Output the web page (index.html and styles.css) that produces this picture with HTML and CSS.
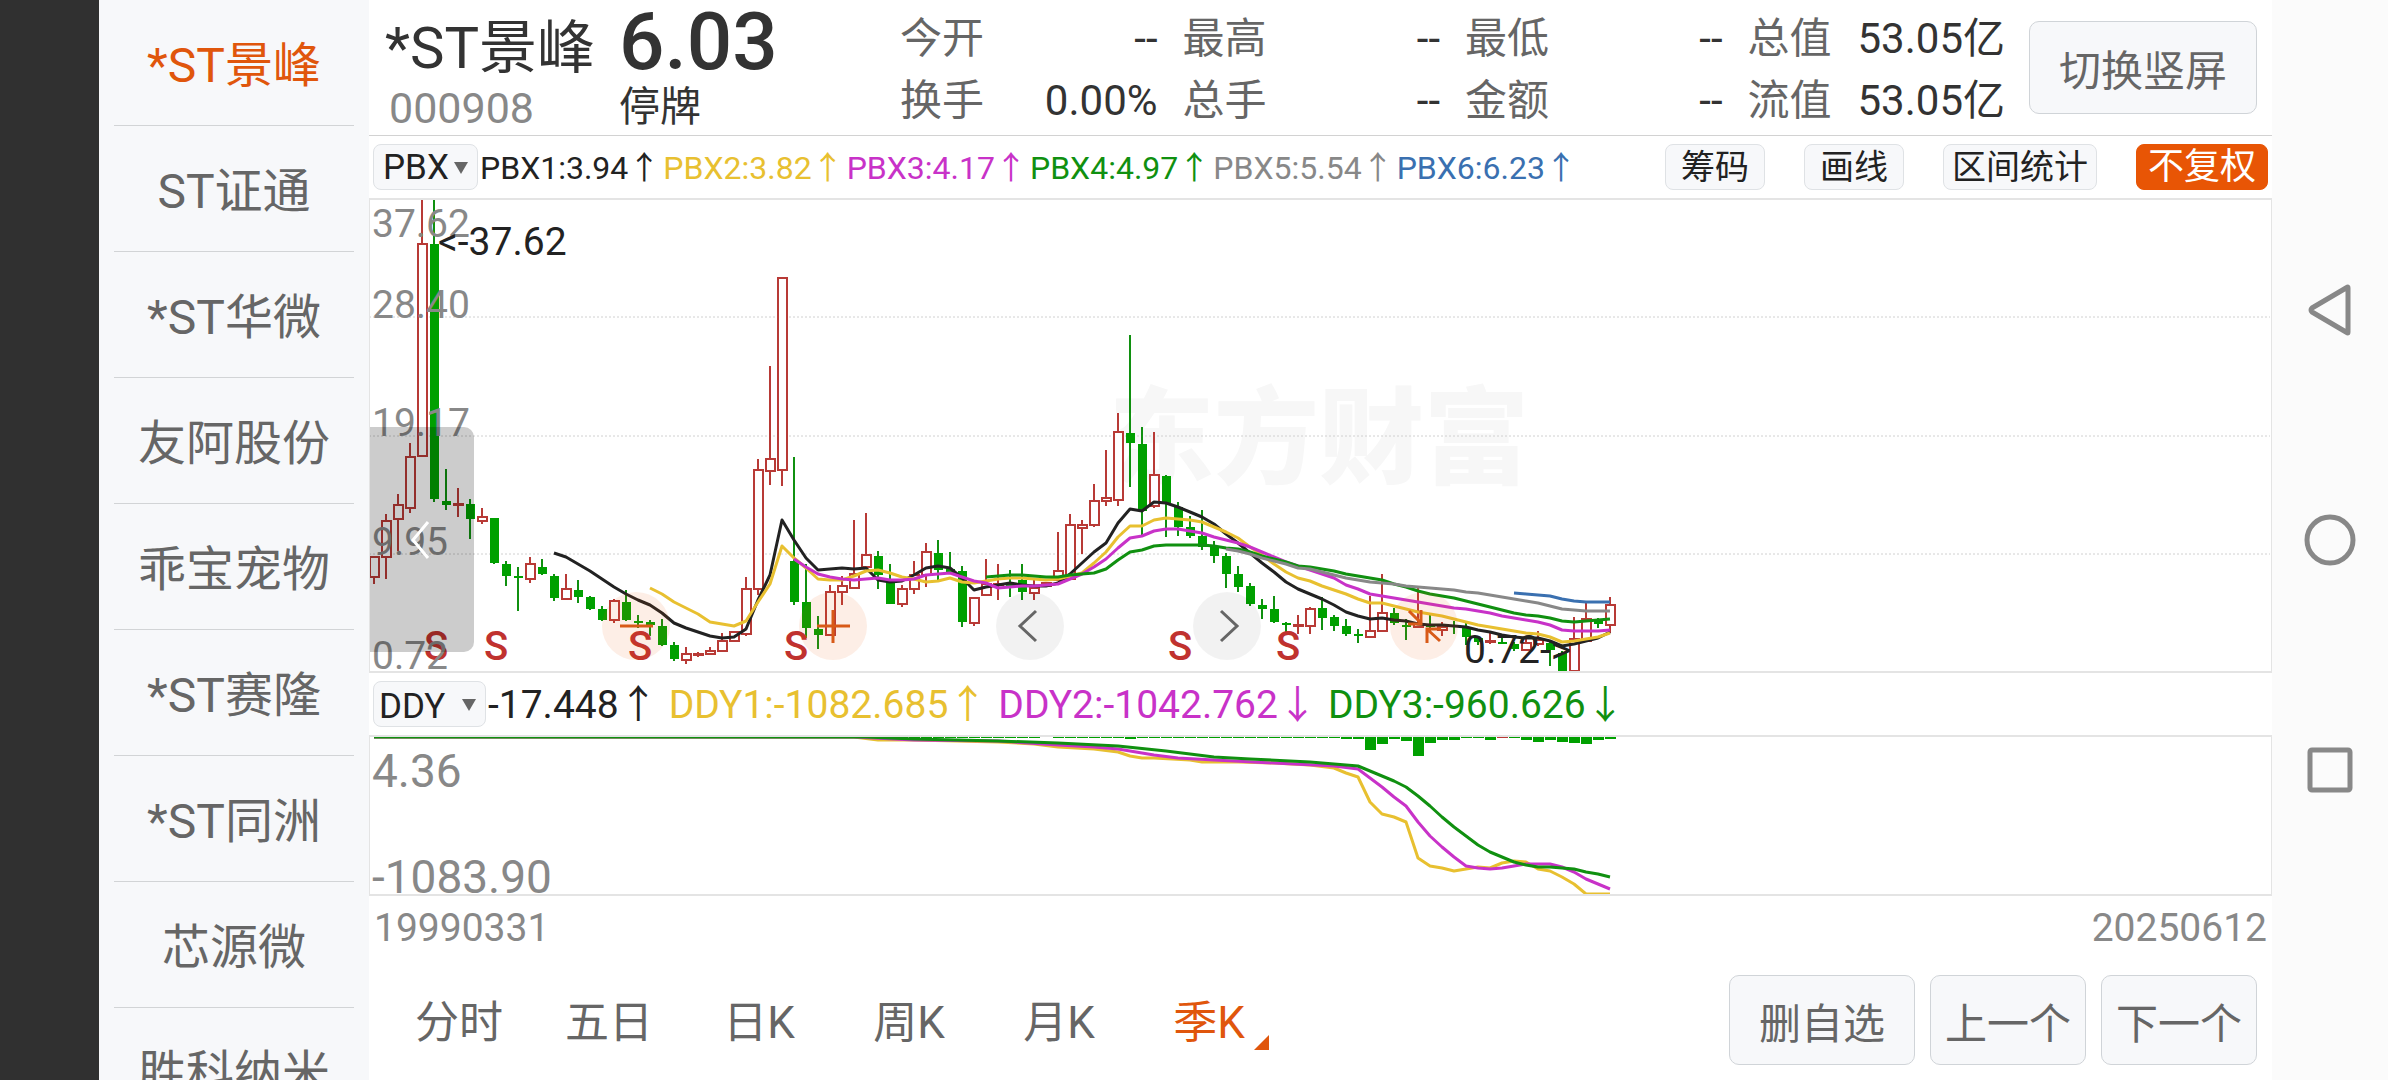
FILE: index.html
```html
<!DOCTYPE html>
<html lang="zh-CN">
<head>
  <meta charset="UTF-8">
  <meta name="viewport" content="width=device-width, initial-scale=1">
  <title>*ST景峰 000908</title>
  <link rel="stylesheet" href="styles.css">
</head>
<body>
  <div class="cutout"></div>

  <nav class="stocks">
    <a href="#" class="active">*ST景峰</a>
    <a href="#">ST证通</a>
    <a href="#">*ST华微</a>
    <a href="#">友阿股份</a>
    <a href="#">乖宝宠物</a>
    <a href="#">*ST赛隆</a>
    <a href="#">*ST同洲</a>
    <a href="#">芯源微</a>
    <a href="#">胜科纳米</a>
  </nav>

  <main>
    <header class="quote">
      <div class="ident">
        <h1>*ST景峰</h1>
        <span class="code">000908</span>
      </div>
      <div class="price">
        <strong>6.03</strong>
        <span>停牌</span>
      </div>
      <dl class="stats">
        <div><dt>今开</dt><dd>--</dd></div>
        <div><dt>最高</dt><dd>--</dd></div>
        <div><dt>最低</dt><dd>--</dd></div>
        <div><dt>总值</dt><dd>53.05亿</dd></div>
        <div><dt>换手</dt><dd>0.00%</dd></div>
        <div><dt>总手</dt><dd>--</dd></div>
        <div><dt>金额</dt><dd>--</dd></div>
        <div><dt>流值</dt><dd>53.05亿</dd></div>
      </dl>
      <button class="btn rotate">切换竖屏</button>
    </header>

    <div class="bar pbx">
      <label class="picker"><select aria-label="主图指标"><option>PBX</option></select></label>
      <p class="legend">
        <span class="c1">PBX1:3.94↑</span>
        <span class="c2">PBX2:3.82↑</span>
        <span class="c3">PBX3:4.17↑</span>
        <span class="c4">PBX4:4.97↑</span>
        <span class="c5">PBX5:5.54↑</span>
        <span class="c6">PBX6:6.23↑</span>
      </p>
      <div class="tools">
        <button>筹码</button>
        <button>画线</button>
        <button>区间统计</button>
        <button class="on">不复权</button>
      </div>
    </div>

    <section class="chart kline">
      <svg id="kline">
        <text class="mark" x="740" y="276">东方财富</text>
        <g class="grid">
          <line x1="0" x2="100%" y1="118" y2="118"/>
          <line x1="0" x2="100%" y1="237" y2="237"/>
          <line x1="0" x2="100%" y1="355" y2="355"/>
        </g>
        <g id="candles"></g>
        <g id="lines"></g>
        <g class="sell">
          <text x="67" y="461">S</text>
          <text x="127" y="461">S</text>
          <text x="271" y="461">S</text>
          <text x="427" y="461">S</text>
          <text x="811" y="461">S</text>
          <text x="919" y="461">S</text>
        </g>
        <g class="axis">
          <text x="3" y="38">37.62</text>
          <text x="3" y="119">28.40</text>
          <text x="3" y="237">19.17</text>
          <text x="3" y="356">9.95</text>
          <text x="3" y="470">0.72</text>
        </g>
        <g class="peak">
          <text x="69" y="56">&lt;-37.62</text>
          <text x="1095" y="464">0.72-&gt;</text>
        </g>
      </svg>
      <button class="drawer" aria-label="收起"><svg width="24" height="44"><path d="M19 4L4 22l15 18"/></svg></button>
      <div class="pad">
        <button class="hot" aria-label="缩小"><svg width="44" height="44"><path d="M6 22h33"/></svg></button>
        <button class="hot" aria-label="放大"><svg width="44" height="44"><path d="M6 22h33M22 6v33"/></svg></button>
        <button aria-label="左移"><svg width="44" height="44"><path d="M28 7L12 22l16 15"/></svg></button>
        <button aria-label="右移"><svg width="44" height="44"><path d="M16 7l16 15-16 15"/></svg></button>
        <button class="hot" aria-label="退出全屏"><svg width="44" height="44"><path d="M7 7l12 12M19 6v14H6M38 37L26 26M25 39V25h14"/></svg></button>
      </div>
    </section>

    <div class="bar ddy">
      <label class="picker"><select aria-label="副图指标"><option>DDY</option></select></label>
      <p class="legend">
        <span class="c1">-17.448↑</span>
        <span class="c2">DDY1:-1082.685↑</span>
        <span class="c3">DDY2:-1042.762↓</span>
        <span class="c4">DDY3:-960.626↓</span>
      </p>
    </div>

    <section class="chart sub">
      <svg id="sub">
        <g id="bars"></g>
        <g id="subLines"></g>
        <text x="3" y="51">4.36</text>
        <text x="3" y="157">-1083.90</text>
      </svg>
    </section>

    <div class="dates"><span>19990331</span><span>20250612</span></div>

    <footer>
      <div class="tabs">
        <button>分时</button>
        <button>五日</button>
        <button>日K</button>
        <button>周K</button>
        <button>月K</button>
        <button class="active">季K</button>
      </div>
      <button class="btn wide">删自选</button>
      <button class="btn">上一个</button>
      <button class="btn">下一个</button>
    </footer>
  </main>

  <nav class="system">
    <button aria-label="返回"><svg width="52" height="60"><path d="M44 8v44q0 2-2 0L8 32q-2-2 0-4L42 8q2-2 2 0z"/></svg></button>
    <button aria-label="主页"><svg width="52" height="60"><circle cx="26" cy="30" r="23"/></svg></button>
    <button aria-label="最近任务"><svg width="52" height="60"><rect x="6" y="10" width="40" height="40" rx="2"/></svg></button>
  </nav>

  <script src="chart.js"></script>
</body>
</html>
```

FILE: styles.css
```css
*{box-sizing:border-box}
html,body{margin:0;padding:0;height:100%}
body{display:grid;grid-template-columns:99px 270px 1fr 116px;grid-template-rows:100%;overflow:hidden;background:#fff;color:#333;font-family:Roboto,"Noto Sans CJK SC",sans-serif}
button,select{font:inherit;color:inherit;background:none;border:0;padding:0;margin:0;cursor:pointer}
h1,p,dl,dd{margin:0}
svg{display:block}

.cutout{background:#303030}

/* watch list */
.stocks{background:#f7f8fa;padding:0 15px;overflow:hidden;min-height:0}
.stocks a{display:flex;align-items:center;justify-content:center;height:126px;padding-bottom:4px;border-bottom:1px solid #d2d4d6;font-size:48px;color:#666;text-decoration:none;white-space:nowrap}
.stocks a.active{color:#e0560c}

main{display:flex;flex-direction:column;min-width:0}

/* quote header */
.quote{display:flex;height:136px;padding-right:15px;border-bottom:1px solid #d2d2d2}
.ident{width:236px;padding-left:16px}
.ident h1{font-size:58px;font-weight:400;line-height:64px;padding-top:16px;white-space:nowrap}
.ident .code{display:block;padding-left:4px;font-size:43px;line-height:56px;color:#888}
.price{width:295px;padding-left:14px}
.price strong{display:block;font-size:80px;font-weight:500;line-height:84px}
.price span{display:block;font-size:41px;line-height:46px}
.stats{flex:1;display:grid;grid-template-columns:repeat(4,1fr);column-gap:25px;align-content:start;padding-top:8px;font-size:42px;line-height:62px}
.stats div{display:flex;justify-content:space-between;white-space:nowrap}
.stats dt{color:#666}
.btn{height:90px;width:156px;background:#f7f8fa;border:1px solid #d0d4d8;border-radius:10px;color:#666;font-size:42px;white-space:nowrap}
.btn.wide{width:186px}
.rotate{width:228px;height:93px;margin:21px 0 0 24px}

/* indicator bars */
.bar{display:flex;align-items:center;height:62px;padding:0 4px}
.pbx{font-size:32px}
.ddy{font-size:39px}
.picker{position:relative;height:46px;background:#f7f8fa;border:1px solid #dfe2e5;border-radius:8px}
.picker::after{content:"";position:absolute;right:9px;top:17px;border:7px solid transparent;border-top:12px solid #666;border-bottom:0;pointer-events:none}
.picker select{appearance:none;width:103px;height:44px;padding-left:9px;font-size:35px;color:#222}
.ddy .picker select{width:111px;padding-left:5px}
.legend{display:flex;gap:11px;padding-bottom:6px;white-space:nowrap;margin-left:2px}
.pbx .legend{gap:3px;padding-bottom:4px}
.c1{color:#222}
.c2{color:#e8c030}
.c3{color:#c832c8}
.c4{color:#109010}
.c5{color:#888}
.c6{color:#3a70b0}
.tools{display:flex;gap:39px;margin-left:auto}
.tools button{height:46px;padding:0 15px;background:#f7f8fa;border:1px solid #dfe2e5;border-radius:8px;color:#222;font-size:34px;line-height:44px;white-space:nowrap}
.tools button:nth-child(3){padding:0 8px}
.tools .on{padding:0 11px;background:#e85505;border-color:#e85505;color:#fff;font-size:36px}

/* charts */
.chart{position:relative;border:solid #e4e4e4;border-width:2px 1px;overflow:hidden}
.chart > svg{width:100%;height:100%;margin:-1px 0 0 -1px;overflow:visible;font-size:39px}
.kline{height:475px}
.sub{height:161px}
.grid line{stroke:#d0d0d0;stroke-width:1;stroke-dasharray:2 2}
.mark{font-size:105px;font-weight:900;fill:#f7f7f7}
.axis text{fill:#888}
.peak text{fill:#222}
.sell text{fill:#c0322f;font-weight:500;text-anchor:middle;font-size:40px}
#sub text{fill:#888;font-size:46px}
.up{fill:#fff;stroke:#b83a36;stroke-width:2}
.down{fill:#00a000;stroke:none}
.wick{stroke-width:2}
.wick.u{stroke:#b83a36}
.wick.d{stroke:#109010}
#lines path,#subLines path{fill:none;stroke:currentColor;stroke-width:3;stroke-linejoin:round}
.drawer{position:absolute;left:-1px;top:227px;width:105px;height:225px;background:rgba(0,0,0,.2);border-radius:0 10px 10px 0}
.drawer svg{margin-left:40px;fill:none;stroke:#fff;stroke-width:3}
.pad{position:absolute;left:232px;top:392px;display:flex;gap:129px}
.pad button{width:68px;height:68px;padding:12px;border-radius:50%;background:rgba(0,0,0,.05)}
.pad .hot{background:rgba(240,90,10,.1)}
.pad svg{fill:none;stroke:#666;stroke-width:3}
.pad .hot svg{stroke:#d85a18}

.dates{display:flex;justify-content:space-between;padding:8px 5px 0;font-size:39px;line-height:48px;color:#888}

/* period tabs */
footer{display:flex;align-items:center;gap:15px;margin-top:auto;padding:0 15px 15px}
.tabs{display:flex;margin-right:auto}
.tabs button{position:relative;width:150px;height:90px;padding-bottom:2px;font-size:44px;color:#666}
.tabs .active{color:#e0560c}
.tabs .active::after{content:"";position:absolute;right:15px;bottom:15px;border-left:15px solid transparent;border-bottom:15px solid #e0560c}

/* android navigation */
.system{display:flex;flex-direction:column;align-items:center;justify-content:center;gap:170px;background:#fbfbfb}
.system svg{fill:none;stroke:#888;stroke-width:5;stroke-linejoin:round}
```

FILE: chart.js
```js
const NS='http://www.w3.org/2000/svg';
const STEP=12,X0=5;
const cx=i=>X0+i*STEP;

function add(parent,tag,attrs){
  const el=document.createElementNS(NS,tag);
  for(const k in attrs)el.setAttribute(k,attrs[k]);
  parent.appendChild(el);
  return el;
}

// ---------- candles: direction, high, body top, body bottom, low ----------
const candles=`u357,358,378,385 u315,322,358,380 u295,306,320,352 u244,258,309,314 u0,45,257,257 d0,45,300,303
d270,302,306,311 u289,305,306,318 d300,305,320,340 u309,318,322,325 d319,319,364,365 d362,365,377,387
d368,377,378,412 u358,365,380,384 d360,368,375,376 d375,377,399,402 u375,390,400,400 d381,391,398,404
d397,398,410,411 d407,410,421,422 u400,402,421,424 d391,403,421,422 d416,422,423,429 d421,423,426,437
d420,427,446,447 d443,446,460,462 u448,455,461,465 u453,455,456,458 u448,452,455,455 u434,442,452,452
u432,433,442,443 u378,390,435,437 u260,271,390,396 u167,260,272,286 u78,79,271,287 d258,362,403,406
d365,403,429,439 d417,430,436,450 u386,393,436,437 u377,387,393,406 u321,375,389,389 u314,356,368,368
d352,357,376,390 d365,383,405,405 u386,390,405,408 u362,376,390,395 u344,353,376,388 d341,354,371,381
d353,370,374,374 d367,372,423,428 u398,399,424,427 u360,385,396,396 u365,385,386,401 d371,385,386,398
d365,381,393,401 u380,389,394,401 u383,384,387,388 u333,372,381,381 u315,326,380,381 u321,326,329,355
u285,302,326,328 u251,299,302,307 u214,233,301,307 d136,234,244,288 d228,245,312,337 u233,276,307,309
d276,277,305,338 d303,308,328,337 d317,328,337,339 d311,337,348,351 d342,347,357,364 d354,357,375,389
d367,375,388,393 d384,387,405,407 d400,406,410,420 d397,410,423,424 d423,424,425,433 u416,426,427,435
u408,410,427,435 d398,409,419,431 d416,418,427,432 d420,427,435,437 d430,435,436,444 u397,432,438,438
u375,414,432,432 d409,414,424,426 d420,426,427,441 u389,425,428,428 d414,426,428,434 u423,428,431,437
d422,426,427,435 d424,429,438,446 d437,439,443,446 u433,442,443,445 d439,443,444,445 d443,445,450,452
u439,444,451,451 u432,441,445,447 d441,444,451,467 d452,454,472,472 u418,440,472,472 u402,420,442,442
d419,420,425,429 u398,406,426,434`.split(/\s+/);

const candleBox=document.getElementById('candles');
candles.forEach((c,i)=>{
  const dir=c[0],[hi,top,bot,lo]=c.slice(1).split(',').map(Number),x=cx(i);
  add(candleBox,'line',{class:'wick '+dir,x1:x,x2:x,y1:hi,y2:lo});
  if(dir==='u')add(candleBox,'rect',{class:'up',x:x-4,y:top,width:9,height:bot-top});
  else add(candleBox,'rect',{class:'down',x:x-4,y:top,width:9,height:Math.max(bot-top,2)});
});

// ---------- PBX lines: class, first candle, values ----------
const pbx=[
  ['c1',15,[354,358,365,372,380,388,395,401,406,414,424,429,433,437,439,438,430,401,376,321,341,359,371,370,369,370,369,381,383,382,376,369,367,369,379,391,388,386,384,386,387,387,384,375,364,353,344,324,310,312,303,304,308,313,318,325,335,344,354,364,373,383,390,395,400,406,413,417,420,419,421,422,425,426,426,427,428,431,433,436,438,439,439,442,447,445,442,439,433]],
  ['c2',23,[389,395,403,409,415,423,425,427,422,403,385,347,359,369,380,381,381,377,372,371,374,378,380,383,382,379,383,384,382,380,379,379,380,381,380,377,374,364,353,338,327,327,321,319,320,321,323,328,333,339,348,356,365,373,379,382,387,391,395,400,404,404,407,410,413,415,417,420,423,426,428,430,432,434,435,438,443,442,440,438,434]],
  ['c3',35,[360,368,375,378,380,381,380,379,381,381,380,376,375,374,378,382,384,389,388,387,387,386,385,380,375,368,360,349,339,337,332,330,330,332,334,338,341,344,348,353,358,363,367,371,375,379,386,390,395,397,399,401,403,405,407,409,410,412,414,417,419,421,423,426,431,432,432,432,431]],
  ['c4',51,[378,377,376,376,377,378,378,376,375,374,370,361,353,351,347,346,346,346,346,347,349,350,353,357,360,363,367,368,370,372,375,377,379,381,385,388,392,395,397,399,402,405,408,411,414,416,417,419,422,423,422,421,420]],
  ['c5',71,[350,352,355,359,362,365,369,370,373,376,379,381,383,384,385,387,388,389,390,391,393,394,396,398,400,402,404,407,410,411,412,412,412]],
  ['c6',95,[394,395,396,397,400,402,403,403,403]]
];
const lineBox=document.getElementById('lines');
pbx.forEach(([cls,start,ys])=>{
  add(lineBox,'path',{class:cls,d:'M'+ys.map((y,k)=>cx(start+k)+' '+y).join('L')});
});

// ---------- DDY histogram ----------
const heights={63:2,81:2,82:2,83:13,84:7,85:2,86:4,87:19,88:6,89:3,90:3,93:3,96:3,97:5,98:3,99:5,100:6,101:7,102:3,103:2};
const barBox=document.getElementById('bars');
for(let i=44;i<104;i++){
  if(i===56)continue;
  add(barBox,'rect',{x:cx(i)-5,y:1,width:11,height:heights[i]||1,fill:i===94?'#b83a36':'#00a000'});
}

// ---------- DDY lines: class, [candle, value] ----------
const ddy=[
  ['c2',[[0,1],[40,1],[42,4],[45,4],[52,6],[55,8],[57,11],[60,13],[62,16],[63,20],[64,22],[65,22],[68,24],[69,26],[72,26],[75,27],[78,29],[80,32],[81,37],[82,41],[83,66],[84,78],[85,81],[86,86],[87,122],[88,130],[89,132],[90,135],[91,133],[92,131],[93,132],[94,127],[95,125],[96,126],[97,133],[98,135],[99,141],[100,148],[101,158],[103,158]]],
  ['c3',[[0,1],[40,1],[45,4],[52,5],[57,9],[60,11],[62,13],[65,19],[67,22],[70,24],[75,27],[80,30],[82,33],[83,42],[84,51],[85,61],[86,70],[87,86],[88,100],[89,111],[90,121],[91,130],[92,132],[93,133],[94,132],[95,130],[96,128],[98,128],[99,131],[100,136],[101,143],[102,148],[103,153]]],
  ['c4',[[0,1],[41,1],[45,3],[52,5],[57,7],[62,10],[66,15],[70,21],[73,23],[78,26],[80,28],[82,30],[83,35],[84,40],[85,45],[86,51],[87,60],[88,70],[89,81],[90,91],[91,100],[92,109],[93,116],[94,121],[95,126],[96,129],[97,131],[98,131],[99,132],[100,133],[101,136],[102,138],[103,141]]]
];
const subBox=document.getElementById('subLines');
ddy.forEach(([cls,pts])=>{
  add(subBox,'path',{class:cls,d:'M'+pts.map(p=>cx(p[0])+' '+p[1]).join('L')});
});
```
